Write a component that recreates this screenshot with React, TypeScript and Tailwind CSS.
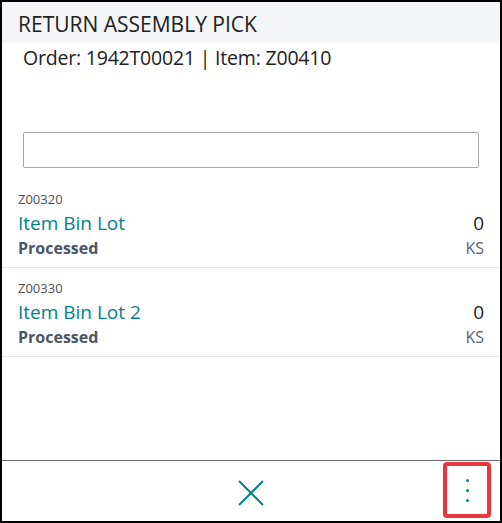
import React from 'react';

interface PickLine {
    code: string;
    name: string;
    status: string;
    qty: number;
    unit: string;
}

const lines: PickLine[] = [
    { code: 'Z00320', name: 'Item Bin Lot', status: 'Processed', qty: 0, unit: 'KS' },
    { code: 'Z00330', name: 'Item Bin Lot 2', status: 'Processed', qty: 0, unit: 'KS' },
];

const App: React.FC = () => {
    return (
        <div
            className="w-[502px] h-[523px] border-2 border-black bg-white flex flex-col overflow-hidden"
            style={{ fontFamily: '"Open Sans", "Noto Sans", sans-serif' }}
        >
            <div className="h-[41px] shrink-0 bg-[#f4f5f7] pl-4 pt-[3px] flex items-center">
                <h1 className="text-[21px] leading-[28px] text-[#212121]">RETURN ASSEMBLY PICK</h1>
            </div>
            <div className="pl-[21px] pt-[1px] text-[19.5px] leading-[28px] text-[#212121] tracking-[-0.2px]">
                Order: 1942T00021 | Item: Z00410
            </div>

            <div className="px-[21px] pt-[60px]">
                <input
                    type="text"
                    className="w-[456px] h-[36px] border border-[#a6a6a6] rounded-[2px] outline-none px-2"
                />
            </div>

            <div className="mt-[11px] flex-1">
                {lines.map((line) => (
                    <div key={line.code} className="h-[89px] border-b border-[#e6e6e6] pl-4 pr-4 pt-[10px] flex justify-between">
                        <div className="flex flex-col">
                            <span className="text-[13px] leading-[20px] text-[#505050]">{line.code}</span>
                            <span className="text-[19px] leading-[28px] text-[#008489]">{line.name}</span>
                            <span className="text-[16px] leading-[22px] font-bold text-[#4b5563]">{line.status}</span>
                        </div>
                        <div className="flex flex-col items-end pt-[20px]">
                            <span className="text-[19px] leading-[28px] text-[#212121]">{line.qty}</span>
                            <span className="text-[16px] leading-[22px] text-[#5b6472]">{line.unit}</span>
                        </div>
                    </div>
                ))}
            </div>

            <div className="h-[61px] shrink-0 border-t border-[#6b6b6b] relative flex items-center justify-center">
                <button className="w-[26px] h-[26px] mt-[4px] flex items-center justify-center">
                    <svg width="26" height="26" viewBox="0 0 26 26" fill="none">
                        <path d="M1 1L25 25M25 1L1 25" stroke="#008489" strokeWidth="2" />
                    </svg>
                </button>
                <div className="absolute right-[9px] top-[1px] w-[48px] h-[56px] border-4 border-[#e8383d] rounded-[4px] flex flex-col items-center justify-center gap-[7px]">
                    <span className="w-[3px] h-[3px] rounded-full bg-[#008489]" />
                    <span className="w-[3px] h-[3px] rounded-full bg-[#008489]" />
                    <span className="w-[3px] h-[3px] rounded-full bg-[#008489]" />
                </div>
            </div>
        </div>
    );
};

export default App;
